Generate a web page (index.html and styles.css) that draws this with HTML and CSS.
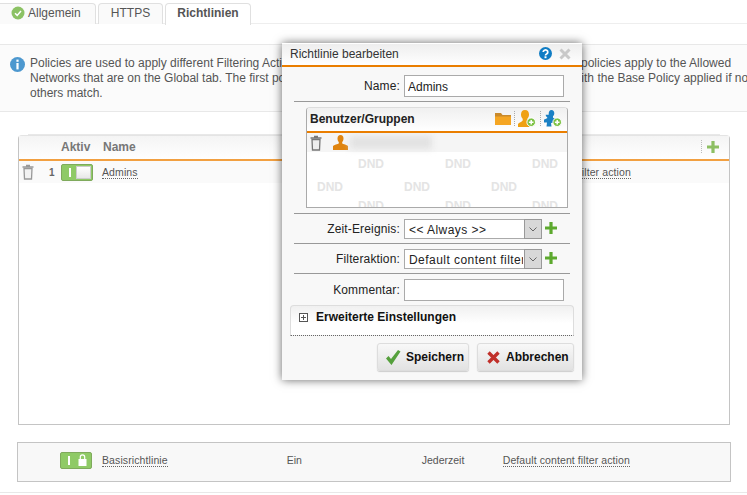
FILE: index.html
```html
<!DOCTYPE html>
<html lang="de">
<head>
<meta charset="utf-8">
<title>Richtlinien</title>
<link rel="stylesheet" href="styles.css">
</head>
<body>
<div class="page">
  <nav class="tabs">
    <a class="tab tab-first"><svg class="tab-icon" viewBox="0 0 14 14"><circle cx="7" cy="7" r="6.5" fill="#8cc264"/><path d="M4 7.2l2.2 2.2L10 5" fill="none" stroke="#fff" stroke-width="1.5"/></svg>Allgemein</a>
    <a class="tab tab-https">HTTPS</a>
    <a class="tab tab-active">Richtlinien</a>
  </nav>

  <section class="info">
    <svg class="info-icon" viewBox="0 0 15 15"><circle cx="7.5" cy="7.5" r="7.5" fill="#4d98cf"/><rect x="6.4" y="2.6" width="2.2" height="2.2" fill="#fff"/><rect x="6.4" y="6" width="2.2" height="6.4" fill="#fff"/></svg>
    <p>Policies are used to apply different Filtering Actions to users and groups at certain times of the day. The policies apply to the Allowed<br>Networks that are on the Global tab. The first policy in the list that matches a browser request is used, with the Base Policy applied if no<br>others match.</p>
  </section>

  <section class="list">
    <header class="list-head">
      <span class="c-active">Aktiv</span>
      <span class="c-name">Name</span>
      <span class="head-add"><svg class="plus" viewBox="0 0 12 12"><path d="M4.4 0h3.2v4.4H12v3.2H7.6V12H4.4V7.6H0V4.400h4.400z" fill="#8dbf62"/></svg></span>
    </header>
    <div class="row">
      <svg class="trash" viewBox="0 0 12 16"><path d="M4 1.500h4M.5 3h11" fill="none" stroke="#999" stroke-width="1.500"/><path d="M2 4.500h8l-.5 10.500h-7z" fill="#f2f2f2" stroke="#999" stroke-width="1.300"/></svg>
      <span class="row-num">1</span>
      <span class="toggle"><i class="toggle-bar"></i><i class="toggle-knob"></i></span>
      <a class="link c-name-cell">Admins</a>
      <a class="link c-action">Default content filter action</a>
    </div>
  </section>

  <section class="base">
    <span class="toggle toggle-lock"><i class="toggle-bar"></i><svg class="lock" viewBox="0 0 9 12"><path d="M2.300 5V3a2.200 2.200 0 0 1 4.400 0v2" fill="none" stroke="#fff" stroke-width="1.200"/><rect x="0.500" y="5" width="8" height="7" fill="#fff"/></svg></span>
    <a class="link c-name-cell">Basisrichtlinie</a>
    <span class="c-ein">Ein</span>
    <span class="c-time">Jederzeit</span>
    <a class="link c-action">Default content filter action</a>
  </section>
  <div class="foot-line"></div>
</div>

<div class="dialog">
  <header class="dialog-title">
    <span class="dialog-name">Richtlinie bearbeiten</span>
    <svg class="help" viewBox="0 0 13 13"><circle cx="6.500" cy="6.500" r="6.500" fill="#0f7cc4"/><path d="M4.200 5a2.300 2.100 0 1 1 3.400 1.900c-.8.400-1.100.8-1.100 1.600" fill="none" stroke="#fff" stroke-width="1.700"/><rect x="5.500" y="9.300" width="2" height="1.900" fill="#fff"/></svg>
    <svg class="close" viewBox="0 0 12 12"><path d="M1.500 1.500l9 9M10.500 1.500l-9 9" stroke="#c9c9c9" stroke-width="3"/></svg>
  </header>
  <div class="dialog-body">
    <div class="form-row form-first">
      <label class="form-label">Name:</label>
      <input class="field" type="text" value="Admins">
    </div>
    <div class="sep"></div>
    <section class="group">
      <header class="group-head">
        <span class="group-title">Benutzer/Gruppen</span>
        <svg class="i-folder" viewBox="0 0 16 13"><path d="M0 1h6l1.500 2H16v10H0z" fill="#c98a2c"/><path d="M0 4.500h16V13H0z" fill="#f5a623"/></svg>
        <i class="dots"></i>
        <svg class="i-user" viewBox="0 0 18 17"><path d="M7 0c2.800 0 4 2 4 4.500 0 2-.8 3.500-1.700 4.300V10.500c1 .7 2 1 3 1.500l-1 5H0v-3c1-1.500 3.800-2 4.700-3.500V8.800C3.800 8 3 6.500 3 4.500 3 2 4.200 0 7 0z" fill="#efa112"/><circle cx="13.200" cy="12.200" r="4.300" fill="#7cc243" stroke="#fff"/><path d="M13.200 9.900v4.600M10.900 12.200h4.600" stroke="#fff" stroke-width="1.500"/></svg>
        <i class="dots"></i>
        <svg class="i-users" viewBox="0 0 18 17"><path d="M7.500 0c1.800 0 2.800 1.300 2.800 3.200 0 1.300-.6 2.400-1.300 3V7.800c.8.500 2 .8 3 1.200l-1 3.500-4 .5.500 3.500H2.500L3 12.500H0V9.800c.8-.8 2.200-1 3.200-1.500V7.300C2.200 6.700 1.700 5.800 1.700 4.700h3C4.500 2 5.500 0 7.500 0z" fill="#1a80c4"/><circle cx="13.200" cy="12.200" r="4.300" fill="#7cc243" stroke="#fff"/><path d="M13.200 9.900v4.600M10.900 12.200h4.600" stroke="#fff" stroke-width="1.500"/></svg>
      </header>
      <div class="group-list">
        <div class="member">
          <svg class="trash" viewBox="0 0 12 16"><path d="M4 1.500h4M.5 3h11" fill="none" stroke="#777" stroke-width="1.500"/><path d="M2 4.500h8l-.5 10.500h-7z" fill="#eee" stroke="#777" stroke-width="1.300"/></svg>
          <svg class="member-user" viewBox="0 0 15 15"><path d="M7.500 0c2 0 3 1.500 3 3.500 0 1.700-.7 3-1.300 3.600v1.400c1 .8 4.800 1.200 5.800 2.500V15H0v-4c1-1.300 4.800-1.700 5.800-2.500V7.100C5.200 6.500 4.500 5.200 4.500 3.500c0-2 1-3.500 3-3.500z" fill="#df8410"/></svg>
          <span class="blurred"></span>
        </div>
        <div class="dnd dnd-a"><span>DND</span><span>DND</span><span>DND</span></div>
        <div class="dnd dnd-b"><span>DND</span><span>DND</span><span>DND</span></div>
        <div class="dnd dnd-a"><span>DND</span><span>DND</span><span>DND</span></div>
      </div>
    </section>
    <div class="sep sep-after-group"></div>
    <div class="form-row">
      <label class="form-label">Zeit-Ereignis:</label>
      <span class="select-wrap">
        <select class="select"><option>&lt;&lt; Always &gt;&gt;</option></select>
        <span class="select-arrow"><svg viewBox="0 0 8 5"><path d="M.5.500L4 4 7.500.500" fill="none" stroke="#666"/></svg></span>
      </span>
      <svg class="plus" viewBox="0 0 12 12"><path d="M4.400 0h3.200v4.400H12v3.200H7.600V12H4.400V7.600H0V4.400h4.400z" fill="#5da92e"/></svg>
    </div>
    <div class="sep"></div>
    <div class="form-row">
      <label class="form-label">Filteraktion:</label>
      <span class="select-wrap">
        <select class="select"><option>Default content filter action</option></select>
        <span class="select-arrow"><svg viewBox="0 0 8 5"><path d="M.5.500L4 4 7.500.500" fill="none" stroke="#666"/></svg></span>
      </span>
      <svg class="plus" viewBox="0 0 12 12"><path d="M4.400 0h3.200v4.400H12v3.200H7.600V12H4.400V7.600H0V4.400h4.400z" fill="#5da92e"/></svg>
    </div>
    <div class="sep"></div>
    <div class="form-row">
      <label class="form-label">Kommentar:</label>
      <input class="field" type="text">
    </div>
    <div class="advanced">
      <span class="expander"></span>
      <span class="advanced-title">Erweiterte Einstellungen</span>
    </div>
    <footer class="actions">
      <button class="btn btn-save" type="button"><svg viewBox="0 0 16 15"><path d="M1 8.500l2.500-2.500L6 9l7-9 2.500 1.500L6.500 15z" fill="#55a03c"/></svg>Speichern</button>
      <button class="btn btn-cancel" type="button"><svg viewBox="0 0 13 13"><path d="M1.500 1.500l10 10M11.500 1.500l-10 10" stroke="#c0302a" stroke-width="3.400"/></svg>Abbrechen</button>
    </footer>
  </div>
</div>
</body>
</html>
```
FILE: styles.css
```css
* { box-sizing: border-box; }
html, body { margin: 0; padding: 0; }
body {
  position: relative;
  width: 747px;
  height: 495px;
  overflow: hidden;
  background: #fff;
  font-family: "Liberation Sans", Arial, sans-serif;
  font-size: 12px;
  color: #555;
}
svg { display: block; flex: none; }

/* tabs */
.tabs {
  display: flex;
  gap: 2px;
  height: 24px;
  padding-top: 3px;
  margin-left: -8px;
  border-bottom: 1px solid #eee;
}
.tab {
  display: flex;
  align-items: center;
  height: 21px;
  border: 1px solid #e0e0e0;
  border-bottom: 0;
  border-radius: 4px 4px 0 0;
  background: #fafafa;
  padding-bottom: 3px;
  white-space: nowrap;
}
.tab-first { width: 104px; padding-left: 18px; }
.tab-icon { width: 14px; height: 14px; margin-right: 3px; }
.tab-https { width: 65px; justify-content: center; }
.tab-active {
  width: 86px;
  justify-content: center;
  font-weight: bold;
  background: #fff;
  height: 22px;
  margin-bottom: -1px;
}

/* info */
.info {
  display: flex;
  height: 68px;
  margin-top: 20px;
  padding: 11px 0 0 10px;
  background: #fbfbfb;
  border-top: 1px solid #e8e8e8;
  border-bottom: 1px solid #e8e8e8;
}
.info-icon { width: 15px; height: 15px; margin-right: 5px; margin-top: 1px; }
.info p {
  margin: 0;
  line-height: 15px;
  white-space: nowrap;
}

/* policy list */
.list {
  margin: 23px 17px 0 18px;
  height: 290px;
  border: 1px solid #c4c4c4;
  border-top-color: #e4e4e4;
  border-radius: 4px 4px 0 0;
  position: relative;
  box-shadow: 0 -11px 0 -10px #e8e8e8;
}
.list-head {
  display: flex;
  align-items: center;
  height: 25px;
  border-bottom: 2px solid #f2a041;
  background: linear-gradient(#f4f4f4, #fff);
  font-weight: bold;
  color: #777;
  padding-bottom: 2px;
}
.c-active { margin-left: 42px; width: 42px; }
.c-name { flex: 1; }
.head-add {
  display: flex;
  align-items: center;
  margin-right: 10px;
  padding-left: 5px;
  border-left: 1px dotted #bbb;
  height: 13px;
}
.plus { width: 12px; height: 12px; }
.row {
  display: flex;
  align-items: center;
  height: 22px;
  background: #fafafa;
  padding-left: 3px;
}
.trash { width: 12px; height: 16px; }
.row-num { margin-left: 15px; width: 12px; font-weight: bold; font-size: 10px; color: #666; }
.toggle {
  display: flex;
  align-items: center;
  width: 32px;
  height: 17px;
  background: #8fca66;
  border: 1px solid #7faa5c;
  border-radius: 2px;
  padding: 1px;
}
.toggle-bar { width: 2px; height: 9px; background: #fff; margin-left: 6px; }
.toggle-knob {
  width: 16px;
  height: 13px;
  margin-left: 5px;
  background: linear-gradient(#fff, #e8e8e8);
  border: 1px solid #ccc;
}
.link {
  font-size: 10.5px;
  letter-spacing: .1px;
  color: #555;
  border-bottom: 1px dotted #666;
  white-space: nowrap;
}
.row .c-name-cell { margin-left: 9px; }
.row .c-action { margin-left: 366px; }

/* base policy */
.base {
  display: flex;
  align-items: center;
  height: 40px;
  margin: 17px 16px 0 17px;
  background: #f8f8f8;
  border: 1px solid #c4c4c4;
  font-size: 10.5px;
  padding: 0 0 4px 42px;
}
.toggle-lock { width: 32px; height: 17px; }
.lock { width: 9px; height: 12px; margin-left: 8px; }
.base .c-name-cell { margin-left: 10px; }
.c-ein { margin-left: 119px; width: 135px; }
.c-time { width: 81px; }
.foot-line { height: 1px; margin-top: 10px; background: #e8e8e8; }

/* dialog */
.dialog {
  position: absolute;
  left: 282px;
  top: 43px;
  width: 300px;
  height: 337px;
  background: #f8f8f8;
  box-shadow: 0 0 9px rgba(0, 0, 0, .6);
  color: #222;
}
.dialog-title {
  display: flex;
  align-items: center;
  height: 24px;
  padding: 0 11px 2px 8px;
  background: linear-gradient(#eee, #fff);
  border-bottom: 2px solid #ea7e00;
  border-top: 1px solid #fff;
}
.dialog-name { flex: 1; color: #333; }
.help { width: 13px; height: 13px; margin-right: 7px; }
.close { width: 12px; height: 12px; }
.dialog-body { padding: 0 8px; }
.form-row { display: flex; align-items: center; height: 22px; }
.form-first { margin-top: 8px; }
.form-label { width: 114px; text-align: right; padding-right: 4px; flex: none; letter-spacing: .15px; }
.field {
  width: 160px;
  height: 22px;
  border: 1px solid #aaa;
  background: #fff;
  font: 12px "Liberation Sans", Arial, sans-serif;
  color: #222;
  padding: 1px 3px 0;
  margin: 0;
}
.sep { height: 1px; margin: 4px 4px 5px; background: #999; }
.sep-after-group { margin-top: 5px; }
.form-row:has(.select-wrap) { height: 20px; }

/* groups */
.group {
  width: 262px;
  height: 101px;
  margin-left: 16px;
  border: 1px solid #aaa;
  border-top-color: #ddd;
  border-radius: 4px 4px 0 0;
  background: #fff;
  overflow: hidden;
}
.group-head {
  display: flex;
  align-items: center;
  height: 25px;
  padding: 0 5px 2px 3px;
  background: linear-gradient(#f0f0f0, #fff);
  border-bottom: 2px solid #ea7e00;
}
.group-title { flex: 1; font-weight: bold; color: #222; }
.i-folder { width: 16px; height: 13px; margin-right: -1px; }
.i-user, .i-users { width: 18px; height: 17px; }
.dots { width: 1px; height: 15px; border-left: 1px dotted #aaa; margin: 0 3px 0 4px; }
.group-list { height: 75px; overflow: hidden; }
.member {
  display: flex;
  align-items: center;
  height: 19px;
  padding-left: 3px;
  background: #f5f5f5;
}
.member-user { width: 15px; height: 15px; margin-left: 11px; }
.blurred {
  width: 82px;
  height: 13px;
  margin-left: 2px;
  background: #e2e2e2;
  filter: blur(3px);
}
.dnd {
  display: flex;
  font-weight: bold;
  font-size: 12px;
  line-height: 13px;
  color: #e4e4e4;
  gap: 61px;
}
.dnd span { width: 26px; }
.dnd-a { padding-left: 51px; margin-top: 6px; }
.dnd-b { padding-left: 10px; margin-top: 10px; }
.dnd-b + .dnd-a { margin-top: 6px; }

/* selects */
.select-wrap { position: relative; display: block; width: 138px; height: 20px; flex: none; }
.select {
  display: block;
  width: 100%;
  height: 20px;
  appearance: none;
  border: 1px solid #aaa;
  border-radius: 0;
  background: #fff;
  font: 12px "Liberation Sans", Arial, sans-serif;
  letter-spacing: .45px;
  color: #222;
  padding: 1px 18px 0 4px;
  margin: 0;
}
.select-arrow {
  position: absolute;
  right: 0;
  top: 0;
  width: 18px;
  height: 20px;
  display: flex;
  align-items: center;
  justify-content: center;
  background: #d8d8d8;
  border: 1px solid #999;
}
.select-arrow svg { width: 8px; height: 5px; }
.form-row .plus { margin-left: 3px; margin-bottom: 2px; }

/* advanced */
.advanced {
  display: flex;
  align-items: center;
  height: 31px;
  margin-top: 4px;
  padding: 0 0 7px 8px;
  border: 1px solid #ddd;
  border-bottom: 1px dotted #666;
  border-radius: 4px 4px 0 0;
  background: linear-gradient(#f0f0f0, #fff 60%);
}
.expander {
  position: relative;
  width: 9px;
  height: 9px;
  border: 1px solid #555;
  background: linear-gradient(#555, #555) center / 5px 1px no-repeat,
              linear-gradient(#555, #555) center / 1px 5px no-repeat, #fff;
}
.advanced-title { margin-left: 8px; font-weight: bold; color: #111; }

/* buttons */
.actions { display: flex; justify-content: flex-end; gap: 8px; margin-top: 7px; }
.btn {
  display: flex;
  align-items: center;
  height: 28px;
  margin: 0;
  border: 1px solid #ddd;
  border-radius: 3px;
  background: linear-gradient(#f8f8f8, #e2e2e2);
  font: bold 12px "Liberation Sans", Arial, sans-serif;
  color: #111;
  box-shadow: 0 1px 1px #ccc;
  white-space: nowrap;
}
.btn-save { width: 92px; padding: 0 0 0 7px; }
.btn-save svg { width: 16px; height: 15px; margin-right: 5px; }
.btn-cancel { width: 97px; padding: 0 0 0 9px; }
.btn-cancel svg { width: 13px; height: 13px; margin-right: 6px; }
```
